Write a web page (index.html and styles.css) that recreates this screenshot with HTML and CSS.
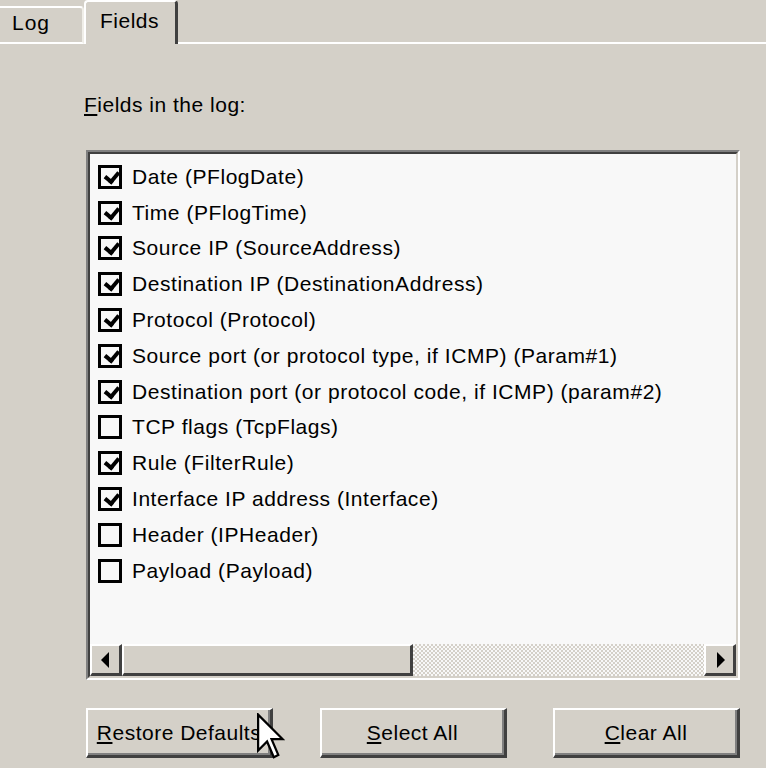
FILE: index.html
```html
<!DOCTYPE html>
<html>
<head>
<meta charset="utf-8">
<link rel="stylesheet" href="styles.css">
</head>
<body>
<div class="tabs">
  <div class="tab tab-log">Log</div>
  <div class="tab tab-active">Fields</div>
  <div class="tab-fill"></div>
</div>
<div class="page">
  <div class="label"><u>F</u>ields in the log:</div>
  <div class="listbox">
    <div class="items">
      <div class="row"><span class="cb on"></span>Date (PFlogDate)</div>
      <div class="row"><span class="cb on"></span>Time (PFlogTime)</div>
      <div class="row"><span class="cb on"></span>Source IP (SourceAddress)</div>
      <div class="row"><span class="cb on"></span>Destination IP (DestinationAddress)</div>
      <div class="row"><span class="cb on"></span>Protocol (Protocol)</div>
      <div class="row"><span class="cb on"></span>Source port (or protocol type, if ICMP) (Param#1)</div>
      <div class="row"><span class="cb on"></span>Destination port (or protocol code, if ICMP) (param#2)</div>
      <div class="row"><span class="cb"></span>TCP flags (TcpFlags)</div>
      <div class="row"><span class="cb on"></span>Rule (FilterRule)</div>
      <div class="row"><span class="cb on"></span>Interface IP address (Interface)</div>
      <div class="row"><span class="cb"></span>Header (IPHeader)</div>
      <div class="row"><span class="cb"></span>Payload (Payload)</div>
    </div>
    <div class="hscroll">
      <div class="sbtn"><span class="arrow-left"></span></div>
      <div class="thumb"></div>
      <div class="track"></div>
      <div class="sbtn"><span class="arrow-right"></span></div>
    </div>
  </div>
  <div class="buttons">
    <div class="btn"><u>R</u>estore Defaults</div>
    <div class="btn"><u>S</u>elect All</div>
    <div class="btn"><u>C</u>lear All</div>
  </div>
</div>
<svg class="cursor" width="28" height="48" viewBox="0 0 12.5 21">
  <path d="M0.5 0.5 L0.5 16.5 L4.5 12.5 L7.5 19.5 L9.5 18.5 L6.5 11.5 L11.5 11.5 Z" fill="#fff" stroke="#000" stroke-width="1"/>
</svg>
</body>
</html>
```

FILE: styles.css
```css
html, body {
  margin: 0;
  padding: 0;
}
body {
  width: 766px;
  height: 768px;
  background: #d4d0c8;
  font-family: "Liberation Sans", Arial, sans-serif;
  font-size: 21px;
  letter-spacing: 0.5px;
  color: #000;
  position: relative;
  overflow: hidden;
}
.tabs {
  display: flex;
  align-items: flex-end;
  height: 44px;
}
.tab {
  box-sizing: border-box;
  line-height: 30px;
}
.tab-log {
  width: 84px;
  height: 38px;
  padding-left: 12px;
  border-top: 2px solid #fff;
  border-right: 2px solid #f0eee8;
  border-bottom: 2px solid #fff;
  border-top-right-radius: 4px;
  letter-spacing: 1px;
}
.tab-active {
  width: 94px;
  height: 44px;
  padding-left: 14px;
  padding-top: 2px;
  border-top: 2px solid #fff;
  border-left: 2px solid #fff;
  border-right: 3px solid #404040;
  border-top-left-radius: 4px;
  border-top-right-radius: 4px;
  line-height: 34px;
}
.tab-fill {
  flex: 1;
  height: 2px;
  background: #fff;
}
.page {
  padding-left: 84px;
}
.label {
  margin-top: 49px;
  line-height: 24px;
  height: 24px;
}
.listbox {
  box-sizing: border-box;
  margin-top: 33px;
  margin-left: 2px;
  width: 654px;
  height: 530px;
  border-top: 2px solid #808080;
  border-left: 2px solid #808080;
  border-right: 2px solid #fff;
  border-bottom: 2px solid #fff;
  display: flex;
  flex-direction: column;
}
.listbox > * {
  box-sizing: border-box;
}
.items {
  flex: 1;
  background: #f8f8f8;
  border-top: 2px solid #404040;
  border-left: 2px solid #404040;
  border-right: 2px solid #d4d0c8;
  padding-top: 5px;
  padding-left: 8px;
}
.row {
  height: 35.8px;
  display: flex;
  align-items: center;
  white-space: nowrap;
  letter-spacing: 0.55px;
}
.cb {
  box-sizing: border-box;
  width: 24px;
  height: 24px;
  border: 3px solid #000;
  background: #f8f8f8;
  margin-right: 10px;
  flex: none;
  position: relative;
}
.cb.on::after {
  content: "";
  position: absolute;
  left: 3px;
  top: 2px;
  width: 6px;
  height: 10px;
  border-right: 4px solid #000;
  border-bottom: 4px solid #000;
  transform: translate(3px, -1px) rotate(40deg);
}
.hscroll {
  height: 34px;
  display: flex;
  border-left: 2px solid #404040;
  border-right: 2px solid #d4d0c8;
  border-bottom: 2px solid #d4d0c8;
}
.sbtn {
  box-sizing: border-box;
  width: 32px;
  height: 32px;
  background: #d4d0c8;
  border-top: 2px solid #fff;
  border-left: 2px solid #fff;
  border-right: 3px solid #404040;
  border-bottom: 3px solid #404040;
  display: flex;
  align-items: center;
  justify-content: center;
}
.thumb {
  box-sizing: border-box;
  width: 291px;
  height: 32px;
  background: #d4d0c8;
  border-top: 2px solid #fff;
  border-left: 2px solid #fff;
  border-right: 3px solid #404040;
  border-bottom: 3px solid #404040;
}
.track {
  flex: 1;
  height: 32px;
  background-color: #f4f4f2;
  background-image: repeating-conic-gradient(#d4d0c8 0 25%, #f8f8f8 0 50%);
  background-size: 4px 4px;
}
.arrow-left {
  width: 0;
  height: 0;
  border-top: 8px solid transparent;
  border-bottom: 8px solid transparent;
  border-right: 8px solid #000;
  margin-left: -2px;
}
.arrow-right {
  width: 0;
  height: 0;
  border-top: 8px solid transparent;
  border-bottom: 8px solid transparent;
  border-left: 8px solid #000;
  margin-left: 2px;
}
.buttons {
  margin-top: 28px;
  margin-left: 2px;
  width: 654px;
  display: flex;
  justify-content: space-between;
}
.btn {
  box-sizing: border-box;
  width: 187px;
  height: 50px;
  border-top: 2px solid #fff;
  border-left: 2px solid #fff;
  border-right: 3px solid #404040;
  border-bottom: 3px solid #404040;
  box-shadow: inset -2px -2px 0 #808080;
  display: flex;
  align-items: center;
  justify-content: center;
  white-space: nowrap;
}
.cursor {
  position: absolute;
  left: 257px;
  top: 713px;
}
```
